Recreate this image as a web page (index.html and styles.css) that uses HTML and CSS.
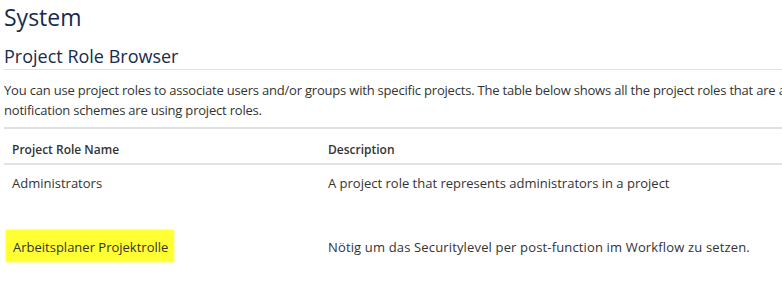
FILE: index.html
```html
<!DOCTYPE html>
<html lang="en">
<head>
    <meta charset="UTF-8">
    <title>Project Role Browser</title>
    <link rel="stylesheet" href="styles.css">
</head>
<body>
    <div class="page">
        <h1>System</h1>
        <h2>Project Role Browser</h2>
        <p class="intro">
            You can use project roles to associate users and/or groups with specific projects. The table below shows all the project roles that are available in JIRA.<br>
            notification schemes are using project roles.
        </p>

        <table class="roles">
            <thead>
                <tr>
                    <th class="col-name">Project Role Name</th>
                    <th>Description</th>
                </tr>
            </thead>
            <tbody>
                <tr>
                    <td>Administrators</td>
                    <td>A project role that represents administrators in a project</td>
                </tr>
                <tr>
                    <td><span class="marked">Arbeitsplaner Projektrolle</span></td>
                    <td class="wide">Nötig um das Securitylevel per post-function im Workflow zu setzen.</td>
                </tr>
            </tbody>
        </table>
    </div>
</body>
</html>
```

FILE: styles.css
```css
body {
    margin: 0;
    font-family: 'Open Sans', sans-serif;
    color: #333333;
    background-color: white;
    overflow: hidden;
}

.page {
    padding: 0 0 0 4px;
    width: 1200px;
}

h1 {
    margin: 0;
    padding-top: 1px;
    font-size: 23px;
    font-weight: 500;
    line-height: 32px;
    color: #172b4d;
}

h2 {
    margin: 12px 0 0;
    font-size: 18px;
    font-weight: 400;
    line-height: 22px;
    color: #172b4d;
    border-bottom: 1px solid #dfe1e6;
    padding-bottom: 2px;
}

.intro {
    margin: 10px 0 0;
    width: 778px;
    font-size: 13px;
    line-height: 20px;
    letter-spacing: -0.2px;
    color: #333333;
    white-space: nowrap;
    overflow: hidden;
}

.roles {
    margin-top: 7px;
    border-collapse: collapse;
    width: 900px;
    border-top: 2px solid #dfe1e6;
}

.roles th {
    text-align: left;
    font-size: 12px;
    font-weight: 600;
    line-height: 16px;
    color: #333333;
    padding: 13px 8px 5px;
    border-bottom: 2px solid #dfe1e6;
}

.roles th.col-name {
    width: 300px;
}

.roles td {
    font-size: 13px;
    line-height: 20px;
    padding: 8px 8px 36px;
    vertical-align: top;
}

.roles td.wide {
    letter-spacing: 0.15px;
}

.marked {
    background-color: #ffff33;
    padding: 8px 6px 6px 7px;
    margin-left: -6px;
    box-shadow: 0 0 2px #ffff33;
}
```
